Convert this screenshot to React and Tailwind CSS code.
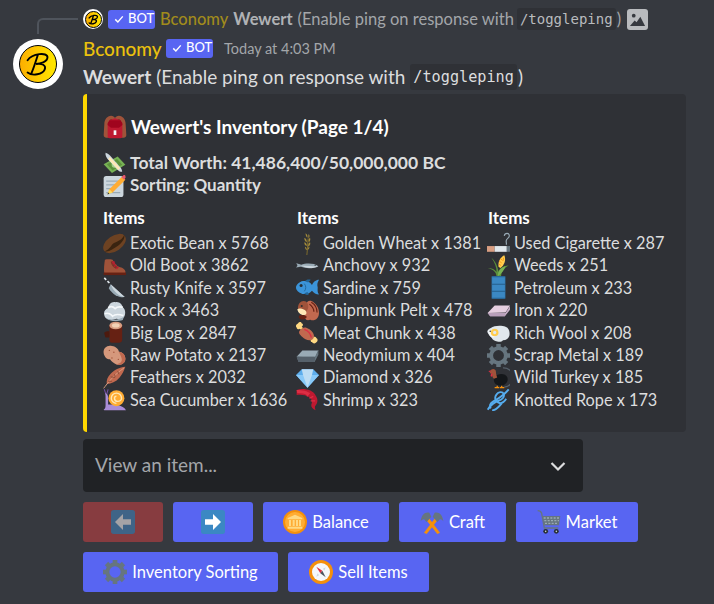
import React from 'react';

function E({ s = 22, className = '', children }) {
  return (
    <svg width={s} height={s} viewBox="0 0 36 36" className={`shrink-0 ${className}`}>
      {children}
    </svg>
  );
}

const icons = {
  backpack: (
    <>
      <path d="M2 14C2 5 8 1 12 1c3 0 5 2 6 3 1-1 3-3 6-3 4 0 10 4 10 13l1 16c0 3-2 4-4 4H5c-2 0-4-1-4-4z" fill="#A0533A" />
      <path d="M8 16c0-6 2-10 5-10l5 3 5-3c3 0 5 4 5 10v18H8z" fill="#7C3225" />
      <path d="M10 8 18 5l8 3 3 6v18c0 2-1 3-3 3H10c-2 0-3-1-3-3V14z" fill="#BE1931" />
      <path d="M7 15 12 19h12l5-4v-3l-3-4H10l-3 4z" fill="#A0041E" />
      <rect x="16" y="23" width="4" height="7" fill="#F5F8FA" />
    </>
  ),
  money: (
    <>
      <path d="M1 19 23 7l12 13-21 13z" fill="#77B255" />
      <path d="M6 19 22 11l8 9-15 9z" fill="#5C913B" />
      <circle cx="18" cy="20" r="4.500" fill="#A6D388" />
      <path d="M4 1c4 1 7 4 9 7l14 16c2 2 3 5 3 7-3 0-5-1-7-3L9 13C6 10 3 5 4 1z" fill="#CCD6DD" />
      <path d="M11 8l16 17-3 3L8 11z" fill="#FFE8B6" />
    </>
  ),
  memo: (
    <>
      <rect x="1" y="3" width="31" height="33" rx="4" fill="#CCD6DD" />
      <path d="M5 10h22v2H5zM5 16h16v2H5zM5 22h9v2H5zM5 28h22v2H5z" fill="#99AAB5" />
      <path d="m10 24 20-20 5 5-20 20-7 2z" fill="#FFAC33" />
      <path d="m29 5 3-3c1-1 3 0 3 1s1 3 0 3l-2 3z" fill="#EA596E" />
      <path d="m10 24 5 5-8 3z" fill="#FFDC5D" />
      <path d="m8 29 2 2-3 1z" fill="#292F33" />
    </>
  ),
  bean: (
    <>
      <ellipse cx="18" cy="18" rx="20" ry="12" transform="rotate(-35 18 18)" fill="#6D4222" />
      <path d="M3 30C12 27 12 20 18 17s12-5 15-12c2 3-2 11-9 16S8 32 3 30z" fill="#3A2410" />
    </>
  ),
  boot: (
    <>
      <path d="M3 9c3-1 8-1 12 0 2 3 4 8 8 10 5 2 11 3 12 8v3H2c-1-6 0-15 1-21z" fill="#A0533A" />
      <path d="M15 11c2 4 4 8 8 9l-3 3c-4-2-7-6-8-11z" fill="#7C3225" />
      <path d="m14 13 4-1m-3 4 4-2m-2 6 4-3m0 6 3-3" stroke="#BE1931" strokeWidth="2" fill="none" />
      <path d="M1 29h35v4H1z" fill="#662113" />
    </>
  ),
  knife: (
    <>
      <path d="M12 13 34 33c-9 1-18-3-25-14z" fill="#99AAB5" />
      <path d="M12 13 34 33c-8-1-17-7-22-20z" fill="#CCD6DD" />
      <path d="m2 3 3 3m2 2 3 3" stroke="#E1E8ED" strokeWidth="2.600" />
    </>
  ),
  rock: (
    <>
      <path d="M3 28c-4-7 1-13 5-14 1-6 6-11 12-9 6-1 10 4 11 8 4 3 5 10 2 15-3 4-8 4-12 3-6 3-15 2-18-3z" fill="#CCD6DD" />
      <path d="M8 14c4-3 8-2 11 1 3-3 8-3 12-2M3 23c5-2 10 1 12 4 3-3 8-4 17-1" fill="none" stroke="#F5F8FA" strokeWidth="2.600" />
      <path d="M5 30c6 3 22 4 28-3l-2 6c-7 2-20 3-26-3z" fill="#99AAB5" />
    </>
  ),
  log: (
    <>
      <path d="M10 7h20v22c0 4-2 5-5 5H14c-3 0-4-2-4-5z" fill="#662113" />
      <path d="M2 19c0-2 3-3 8-3v10H6c-2 0-3-1-3-3z" fill="#4D1A0E" />
      <ellipse cx="20" cy="7" rx="10" ry="6" fill="#D99E82" />
      <ellipse cx="20" cy="7" rx="6" ry="3.300" fill="#F3D2B6" />
    </>
  ),
  potato: (
    <>
      <path d="M1 14C0 6 7 1 14 3c7 1 10 5 11 9 6 1 10 5 10 11 0 8-8 11-14 9-5-2-8-5-10-8-5 0-9-4-10-10z" fill="#D5987C" />
      <path d="M25 12c6 1 10 5 10 11 0 8-8 11-14 9 6-1 10-5 8-10-1-4-3-7-4-10z" fill="#C1694F" />
      <g fill="#A0533A"><circle cx="10" cy="10" r="1.100" /><circle cx="17" cy="13" r="1.100" /><circle cx="14" cy="22" r="1.100" /><circle cx="24" cy="24" r="1.100" /></g>
    </>
  ),
  feather: (
    <>
      <path d="M35 1C26 2 17 6 12 12 7 17 5 23 6 28c7 0 14-3 20-10 4-5 7-11 9-17z" fill="#C1694F" />
      <path d="M1 35C7 27 17 14 33 3" stroke="#D99E82" strokeWidth="1.500" fill="none" />
      <path d="m12 17 7 1m-11 6 6 0m9-16 2 5m-7 0 1 4" stroke="#8A4633" strokeWidth="1.300" />
    </>
  ),
  snail: (
    <>
      <path d="M3 8c3 0 5 3 5 7v11c10 0 23 0 28 9H6c-3 0-5 0-5-1 2-1 3-3 3-7V14c0-2 0-4-1-6z" fill="#AA8DD8" />
      <path d="m4 8-2-6m4 7 2-7" stroke="#744EAA" strokeWidth="1.600" />
      <circle cx="21" cy="16" r="12.500" fill="#FFAC33" />
      <path d="M21 24a8 8 0 1 1 8-8c0 3-3 5-6 5a5 5 0 0 1-5-5c0-2 1-3 3-3" fill="none" stroke="#FFE8B6" strokeWidth="2.200" />
    </>
  ),
  wheat: (
    <>
      <path d="M17 36c1-8 1-18 2-26" stroke="#7D6A2D" strokeWidth="1.600" fill="none" />
      <path d="M15 2c3 2 3 4 3 7-2-1-3-4-3-7zm5 1c2 3 1 5 0 7-1-3-1-5 0-7zM13 9c3 1 4 4 4 7-3-1-4-4-4-7zm9 0c1 3 0 6-2 7-1-3 0-6 2-7zM13 16c3 1 4 3 4 6-3-1-4-3-4-6zm9 0c1 3 0 5-3 7 0-3 0-6 3-7zM14 23c2 1 3 3 3 5-2 0-3-3-3-5zm7 0c0 3-1 4-3 5 0-2 1-4 3-5z" fill="#A38B3B" />
    </>
  ),
  anchovy: (
    <>
      <path d="M0 15c3 2 3 4 0 6 4 0 6-1 8-1 7 3 20 3 27-1-6-5-20-5-27-2-2-1-5-2-8-2z" fill="#99AAB5" />
      <path d="M8 18c8 1 18 1 27 1-7 4-20 4-27-1z" fill="#CCD6DD" />
      <circle cx="30" cy="17.500" r="1" fill="#292F33" />
    </>
  ),
  sardine: (
    <>
      <path d="M36 6c-3 5-3 8-2 12 0 4-1 7 2 11-5 0-8-3-11-6-4 5-10 6-15 5C4 26 0 22 0 18s5-9 11-10c6-1 11 1 14 6 2-4 6-8 11-8z" fill="#3B94D9" />
      <path d="M14 8c3-3 7-3 9-2-1 2-3 3-4 4zM13 27c2 3 5 3 7 2l-2-4z" fill="#226699" />
      <circle cx="8" cy="15" r="2.400" fill="#292F33" />
      <path d="M13 12c3 3 3 9 0 12" fill="none" stroke="#226699" strokeWidth="1.400" />
    </>
  ),
  chipmunk: (
    <>
      <path d="M21 33c-5 1-8-2-8-8V14c0-3 5-5 9-3 7 3 8 12 3 19z" fill="#C1694F" />
      <path d="M23 33c7 2 13-3 13-11 0-9-5-16-12-19-4-1-8 1-7 5 1 5 8 8 7 13-1 4-5 8-1 12z" fill="#C1694F" />
      <path d="M24 5c5 3 9 9 9 16M21 8c4 3 7 7 7 12" stroke="#662113" strokeWidth="1.800" fill="none" />
      <path d="M3 14C3 8 7 3 12 3c5 0 8 5 7 11-1 5-5 7-9 7-4 0-7-3-7-7z" fill="#A0533A" />
      <path d="M2 16c1 5 6 10 11 9 5 0 4-6 0-8-4-2-8-3-11-1z" fill="#FFE8B6" />
      <circle cx="9" cy="11" r="1.600" fill="#292F33" />
      <path d="M5 26c4-2 10-1 12 2-2 4-9 5-11 3-2-1-2-3-1-5z" fill="#662113" />
    </>
  ),
  meat: (
    <>
      <path d="M3 4c2-3 5-3 6 0 2 0 3 3 0 5l6 6-3 3-6-6c-2 2-5 0-5-2-2-1-1-5 2-6z" fill="#FFD983" />
      <path d="M31 34c-2 2-5 1-6-1-2 0-3-3-1-5l-6-6 3-3 6 6c2-1 5 0 5 2 3 1 2 6-1 7z" fill="#FFD983" />
      <path d="M6 15c3-4 7-6 11-4 6 2 10 7 11 11 1 4-1 7-5 8-5 1-10-2-13-5-4-3-7-7-4-10z" fill="#C1694F" />
      <path d="M13 13c5 2 10 6 11 13" stroke="#DD2E44" strokeWidth="2" fill="none" />
    </>
  ),
  neodymium: (
    <>
      <path d="M1 20 10 10h25l-5 11z" fill="#99AAB5" />
      <path d="M1 20h29l5-11v8l-6 11H4z" fill="#66757F" />
      <path d="M1 20h28l1 1-1 7H4z" fill="#55606A" />
    </>
  ),
  diamond: (
    <>
      <path d="M9 5h18l9 9-18 20L0 14z" fill="#5DADEC" />
      <path d="M0 14h36L18 34z" fill="#88C9F9" />
      <path d="m11 14 7 20 7-20z" fill="#BDDDF4" />
      <path d="M9 5h18l-2 9H11z" fill="#BDDDF4" />
    </>
  ),
  shrimp: (
    <>
      <path d="M1 3c10-3 25-1 30 9 4 6 3 12-1 16-1 2 0 5 1 7-5-2-8-5-7-9 2-5 1-9-4-12C15 11 8 10 1 11z" fill="#BE1931" />
      <path d="M21 8l-4 5M27 13l-6 3M30 20h-7" stroke="#DD2E44" strokeWidth="2" fill="none" />
      <path d="M1 3c4 0 14 0 21 5l-4 4C14 9 8 8 2 8z" fill="#DD2E44" />
    </>
  ),
  cigarette: (
    <>
      <path d="M0 22h12v9H0z" fill="#D99E82" />
      <path d="M12 22h19v9H12z" fill="#E1E8ED" />
      <path d="M31 22h5v9h-5z" fill="#66757F" />
      <path d="M27 6c1-5 8-5 8 0 0 4-5 4-5 8s1 4 0 6" fill="none" stroke="#99AAB5" strokeWidth="1.800" />
    </>
  ),
  weeds: (
    <>
      <path d="M15 36c0-8-6-12-14-14 7 0 11 2 14 6 0-7-3-15-8-22 7 6 10 15 11 22 1-5 6-9 16-10-8 4-12 10-12 18z" fill="#5C913B" />
      <path d="M18 20c-1-8 3-15 9-18 3 6 1 15-6 20z" fill="#FFCC4D" />
      <path d="M21 7l3 3m-5 1 4 3m-4 2 3 2m4-12-1 5" stroke="#F4900C" strokeWidth="1.300" />
      <path d="M17 34c0-8 5-13 12-15-2 6-6 11-11 15z" fill="#77B255" />
    </>
  ),
  barrel: (
    <>
      <rect x="7" y="0" width="22" height="36" rx="1.500" fill="#2A6797" />
      <rect x="8" y="2" width="20" height="10" fill="#3B88C3" />
      <rect x="8" y="14" width="20" height="9" fill="#3B88C3" />
      <rect x="8" y="25" width="20" height="9" fill="#3B88C3" />
    </>
  ),
  iron: (
    <>
      <path d="M1 22 12 10h24l-7 11z" fill="#E6CFE0" />
      <path d="M1 22h28l7-11v6l-8 10H5z" fill="#C9B0C7" />
      <path d="M1 22h28l-1 5H5z" fill="#B9A0BA" />
    </>
  ),
  wool: (
    <>
      <path d="M6 11c5-4 16-5 23-2 6 2 7 9 6 14-1 4-5 7-10 7-2 3-6 3-9 2-4 0-7-2-9-6C3 22-1 17 1 15c1-2 3-3 5-4z" fill="#E1E8ED" />
      <path d="M2 15c5-3 12-2 16 2-1 6-6 9-10 9-4-1-6-7-6-11z" fill="#F5F8FA" />
      <circle cx="12" cy="18" r="6" fill="#FFCC4D" />
      <circle cx="12" cy="18" r="2.600" fill="#E1E8ED" />
      <circle cx="5" cy="16" r="1.200" fill="#292F33" />
    </>
  ),
  gear: (
    <g fill="#66757F">
      <circle cx="18" cy="18" r="11.500" fill="none" stroke="#66757F" strokeWidth="6" />
      {[0, 45, 90, 135, 180, 225, 270, 315].map(a => (
        <rect key={a} x="14.500" y="0" width="7" height="8" transform={`rotate(${a} 18 18)`} />
      ))}
    </g>
  ),
  turkey: (
    <>
      <path d="M25 3a15 15 0 0 1 2 30" fill="none" stroke="#55606A" strokeWidth="2" />
      <path d="M12 17c5-6 17-6 20 1 2 7-4 13-11 13S8 25 12 17z" fill="#14171A" />
      <path d="M5 9c0-5 9-6 9 0 0 4 1 6 2 9l-5 2c-3-2-3-6-3-8-2 0-5 0-3-3z" fill="#A0533A" />
      <path d="M2 8 6 7l-1 3zM8 11c1 2 1 5-1 6-2-1-2-4 1-6z" fill="#DD2E44" />
      <path d="M15 31h2v3h-2zM22 31h2v3h-2zM12 33h7v2h-7zM20 33h7v2h-7z" fill="#F4900C" />
    </>
  ),
  rope: (
    <g fill="none" stroke="#55ACEE" strokeWidth="3">
      <path d="M1 34c4-6 10-12 17-14 6-2 10-6 8-11-2-4-8-3-11 1-4 5-2 10 3 13 5 2 9-1 12-6" />
      <path d="M6 32c-3-4-1-8 4-11 8-5 16-9 24-19" />
      <path d="M8 35c6 0 11-6 15-11" />
    </g>
  ),
  left: (
    <>
      <rect width="36" height="36" rx="4" fill="#3F6487" />
      <path d="M6 18 18 6v8h12v8H18v8z" fill="#A5A3A6" />
    </>
  ),
  right: (
    <>
      <rect width="36" height="36" rx="4" fill="#3B88C3" />
      <path d="M30 18 18 6v8H6v8h12v8z" fill="#FFF" />
    </>
  ),
  bank: (
    <>
      <circle cx="18" cy="18" r="18" fill="#F4900C" />
      <circle cx="18" cy="18" r="15" fill="#FFAC33" />
      <path d="m18 7 11 5v2H7v-2z" fill="#FFD983" />
      <path d="M9 15h3v9H9zM14.500 15h3v9h-3zM19.500 15h3v9h-3zM24 15h3v9h-3zM7 25h22v3H7z" fill="#FFD983" />
    </>
  ),
  tools: (
    <>
      <path d="M6 34 25 9l4 3L10 36z" fill="#F4900C" />
      <path d="M30 34 11 9l-4 3 19 24z" fill="#F4900C" />
      <path d="M1 17C2 7 8 2 14 4l3 6-7 8-4-4c-2 0-4 1-5 3z" fill="#66757F" />
      <path d="M35 17C34 7 28 2 22 4l-3 6 7 8 4-4c2 0 4 1 5 3z" fill="#66757F" />
    </>
  ),
  cart: (
    <>
      <path d="M1 1c3 0 5 1 6 4l4 22h21" fill="none" stroke="#66757F" strokeWidth="2" />
      <path d="M8 9h27l-2 14H11z" fill="#66757F" />
      <path d="M10 11h3v2h-3zm5 0h3v2h-3zm5 0h3v2h-3zm5 0h3v2h-3zm5 0h3v2h-3zM11 15h3v2h-3zm5 0h3v2h-3zm5 0h3v2h-3zm5 0h3v2h-3zm5 0h2v2h-2zM12 19h3v2h-3zm5 0h3v2h-3zm5 0h3v2h-3zm5 0h3v2h-3z" fill="#99AAB5" />
      <circle cx="13" cy="32" r="3.600" fill="#292F33" />
      <circle cx="29" cy="32" r="3.600" fill="#292F33" />
      <circle cx="13" cy="32" r="1.200" fill="#CCD6DD" />
      <circle cx="29" cy="32" r="1.200" fill="#CCD6DD" />
    </>
  ),
  compass: (
    <>
      <circle cx="18" cy="18" r="18" fill="#F4900C" />
      <circle cx="18" cy="18" r="13.500" fill="#F5F8FA" />
      <path d="m11 10 9 6-3 4z" fill="#DD2E44" />
      <path d="m25 26-8-6 3-4z" fill="#4B545D" />
      <path d="m21 13 4-2-2 5zM15 23l-4 2 2-5z" fill="#CCD6DD" />
    </>
  ),
};

const columns = [
  {
    width: 'w-[194px]',
    items: [
      ['bean', 'Exotic Bean x 5768'],
      ['boot', 'Old Boot x 3862'],
      ['knife', 'Rusty Knife x 3597'],
      ['rock', 'Rock x 3463'],
      ['log', 'Big Log x 2847'],
      ['potato', 'Raw Potato x 2137'],
      ['feather', 'Feathers x 2032'],
      ['snail', 'Sea Cucumber x 1636'],
    ],
  },
  {
    width: 'w-[191px]',
    items: [
      ['wheat', 'Golden Wheat x 1381'],
      ['anchovy', 'Anchovy x 932'],
      ['sardine', 'Sardine x 759'],
      ['chipmunk', 'Chipmunk Pelt x 478'],
      ['meat', 'Meat Chunk x 438'],
      ['neodymium', 'Neodymium x 404'],
      ['diamond', 'Diamond x 326'],
      ['shrimp', 'Shrimp x 323'],
    ],
  },
  {
    width: 'w-[190px]',
    items: [
      ['cigarette', 'Used Cigarette x 287'],
      ['weeds', 'Weeds x 251'],
      ['barrel', 'Petroleum x 233'],
      ['iron', 'Iron x 220'],
      ['wool', 'Rich Wool x 208'],
      ['gear', 'Scrap Metal x 189'],
      ['turkey', 'Wild Turkey x 185'],
      ['rope', 'Knotted Rope x 173'],
    ],
  },
];

function BotTag({ className = '' }) {
  return (
    <span className={`flex items-center h-[19px] w-[47px] rounded-[3px] bg-[#5865f2] text-white text-[13px] font-medium pl-[5px] gap-[3px] ${className}`}>
      <svg width="12" height="12" viewBox="0 0 16 16">
        <path d="M3 8.500 6.500 12 13 4.500" fill="none" stroke="#fff" strokeWidth="1.900" />
      </svg>
      BOT
    </span>
  );
}

// round gold logo with the script B mark
function Logo({ outer, inner, stroke }) {
  return (
    <div className={`${outer} rounded-full bg-white flex items-center justify-center shrink-0`}>
      <div className={`${inner} rounded-full border border-black bg-linear-to-r from-[#fcae00] to-[#ffe800] flex items-center justify-center`}>
        <svg viewBox="0 0 38 38" className="w-full h-full">
          <path
            d="M8 15C13 8 29 6 29 12c0 5-8 7-12 7 6-1 11 1 9 6-2 5-13 7-18 3M19 9c-2 6-4 13-7 20"
            fill="none"
            stroke="#000"
            strokeWidth={stroke}
            strokeLinecap="round"
          />
        </svg>
      </div>
    </div>
  );
}

function Btn({ icon, label, width, red }) {
  return (
    <div className={`${width} h-10 rounded-[3px] flex items-center justify-center gap-[5px] text-white text-[16.500px] ${red ? 'bg-[#873c40]' : 'bg-[#5865f2]'}`}>
      <E s={24}>{icons[icon]}</E>
      {label && <span>{label}</span>}
    </div>
  );
}

export default function App() {
  return (
    <div className="w-[714px] h-[604px] bg-[#36393f] overflow-hidden font-['Lato','Noto_Sans',sans-serif] text-[#dcddde]">
      {/* Reply line */}
      <div className="flex h-[40px] pt-[9px]">
        <div className="w-[83px] pl-[37px] pt-[9px] shrink-0">
          <div className="w-[41px] h-[16px] border-l-2 border-t-2 border-[#4f545c] rounded-tl-md" />
        </div>
        <div className="flex items-center h-[20px] text-[#a3a6aa] text-[16.500px] whitespace-nowrap">
          <Logo outer="w-5 h-5" inner="w-[17px] h-[17px]" stroke="3.500" />
          <span className="ml-[5px]"><BotTag /></span>
          <span className="ml-[5px] text-[#a18b1c] font-medium">Bconomy</span>
          <span className="ml-[5px] font-bold text-[#b0b2b5]">Wewert</span>
          <span className="ml-[5px]">(Enable ping on response with</span>
          <code className="ml-[3px] px-[3px] h-[22px] leading-[22px] bg-[#2f3136] rounded-[3px] text-[14px] font-['DejaVu_Sans_Mono',monospace] text-[#b9bbbe]">/toggleping</code>
          <span className="ml-[1px]">)</span>
          <span className="ml-[6px] w-[21px] h-[21px] rounded-[3px] bg-[#b9bbbe] flex items-center justify-center">
            <svg width="17" height="17" viewBox="0 0 18 18">
              <circle cx="5" cy="5" r="2" fill="#36393f" />
              <path d="M1 16 6 10l2 2 4-6 5 10z" fill="#36393f" />
            </svg>
          </span>
        </div>
      </div>

      {/* Message */}
      <div className="flex">
        <div className="w-[83px] pl-[13px] shrink-0 -mt-[1px]">
          <Logo outer="w-[50px] h-[50px]" inner="w-[38px] h-[38px]" stroke="2" />
        </div>
        <div className="w-[603px]">
          <div className="flex items-center h-[20px] -mt-[1px] whitespace-nowrap">
            <span className="text-[#ebc10d] text-[19px] font-medium w-[83px]">Bconomy</span>
            <BotTag className="-mt-[2px]" />
            <span className="ml-[11px] text-[14.500px] text-[#a3a6aa]">Today at 4:03 PM</span>
          </div>
          <div className="flex items-center h-[24px] mt-[6px] text-[19px] whitespace-nowrap">
            <span className="font-bold">Wewert</span>
            <span className="ml-[5px]">(Enable ping on response with</span>
            <code className="ml-[5px] px-[3px] h-[26px] leading-[26px] bg-[#2f3136] rounded-[3px] text-[15.200px] font-['DejaVu_Sans_Mono',monospace]">/toggleping</code>
            <span className="ml-[1px]">)</span>
          </div>

          {/* Embed */}
          <div className="mt-[5px] h-[338px] rounded-[4px] border-l-4 border-[#ffd700] bg-[#2f3136] pl-4 pt-[20px]">
            <div className="flex items-center gap-[4px] h-[26px] text-white text-[19px] font-bold">
              <E s={24}>{icons.backpack}</E>
              Wewert's Inventory (Page 1/4)
            </div>
            <div className="mt-[12px] font-bold text-[#dcddde]">
              <div className="flex items-center gap-[4px] h-[22px] text-[17.500px]">
                <E s={23}>{icons.money}</E>
                Total Worth: 41,486,400/50,000,000 BC
              </div>
              <div className="flex items-center gap-[4px] h-[22px] text-[17px]">
                <E s={23}>{icons.memo}</E>
                Sorting: Quantity
              </div>
            </div>
            <div className="flex mt-[11px]">
              {columns.map((col, i) => (
                <div key={i} className={col.width}>
                  <div className="h-[22px] leading-[22px] text-white text-[17px] font-bold">Items</div>
                  <div className="mt-[3px]">
                    {col.items.map(([icon, label]) => (
                      <div key={label} className="flex items-center gap-[4px] h-[22.400px] text-[16.300px] whitespace-nowrap">
                        <E s={23} className={i > 0 ? '-ml-[1px]' : ''}>{icons[icon]}</E>
                        {label}
                      </div>
                    ))}
                  </div>
                </div>
              ))}
            </div>
          </div>

          {/* Select */}
          <div className="mt-[7px] w-[500px] h-[53px] bg-[#202225] rounded-[4px] flex items-center justify-between pl-3 pr-4 text-[19px] text-[#a3a6aa]">
            <span>View an item...</span>
            <svg width="18" height="18" viewBox="0 0 18 18">
              <path d="M2.500 6 9 12.500 15.500 6" fill="none" stroke="#dcddde" strokeWidth="2.200" />
            </svg>
          </div>

          {/* Buttons */}
          <div className="flex gap-[10px] mt-[10px]">
            <Btn icon="left" width="w-20" red />
            <Btn icon="right" width="w-20" />
            <Btn icon="bank" label="Balance" width="w-[126px]" />
            <Btn icon="tools" label="Craft" width="w-[107px]" />
            <Btn icon="cart" label="Market" width="w-[122px]" />
          </div>
          <div className="flex gap-[10px] mt-[10px]">
            <Btn icon="gear" label="Inventory Sorting" width="w-[195px]" />
            <Btn icon="compass" label="Sell Items" width="w-[141px]" />
          </div>
        </div>
      </div>
    </div>
  );
}
